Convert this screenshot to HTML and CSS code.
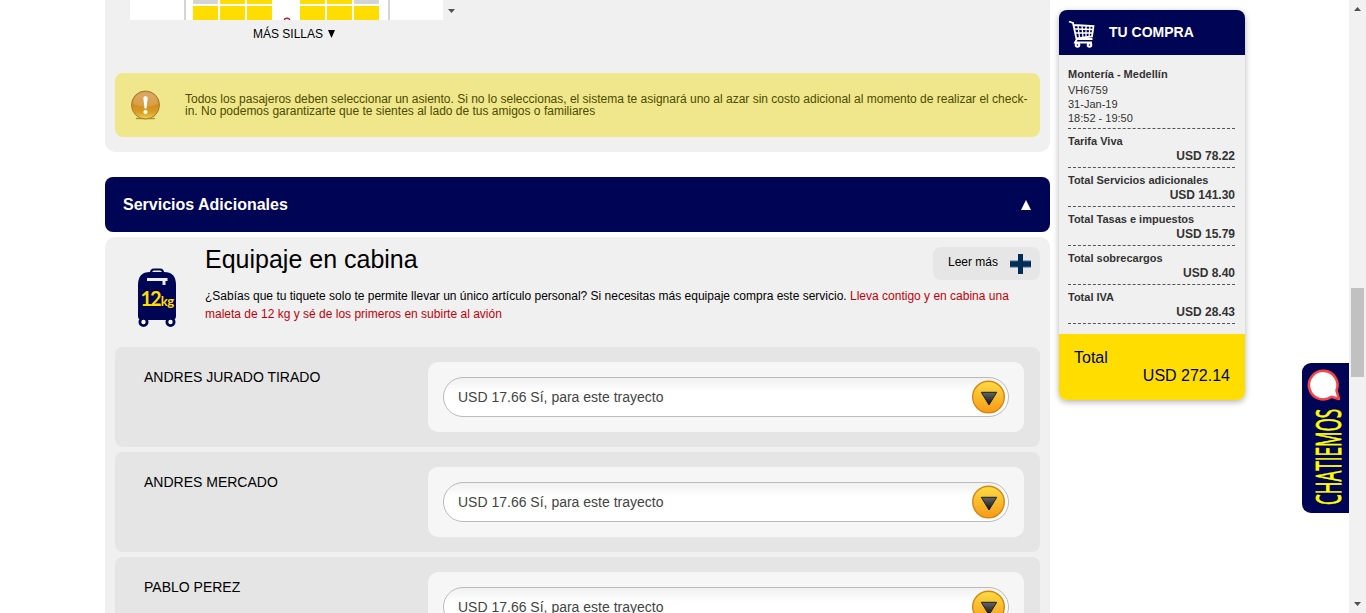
FILE: index.html
```html
<!DOCTYPE html>
<html lang="es">
<head>
<meta charset="utf-8">
<title>Servicios Adicionales</title>
<link rel="stylesheet" href="styles.css">
</head>
<body>
<svg class="defs" width="0" height="0" aria-hidden="true">
  <defs>
    <linearGradient id="gold" x1="0" y1="0" x2="0" y2="1"><stop offset="0" stop-color="#fbdc45"/><stop offset="1" stop-color="#f79a17"/></linearGradient>
    <linearGradient id="dark" x1="0" y1="0" x2="0" y2="1"><stop offset="0" stop-color="#666"/><stop offset="1" stop-color="#111"/></linearGradient>
    <linearGradient id="warn" x1="0" y1="0" x2="0" y2="1"><stop offset="0" stop-color="#d59a52"/><stop offset=".5" stop-color="#d28c22"/><stop offset=".75" stop-color="#d99c20"/><stop offset="1" stop-color="#ecd34e"/></linearGradient>
    <symbol id="drop" viewBox="0 0 34 34">
      <circle cx="16.500" cy="17" r="15.800" fill="url(#gold)" stroke="#d98510" stroke-width="1.400"/>
      <path d="M9.300 12.300h15.400L17 25z" fill="url(#dark)" stroke="#1c2022" stroke-width="1"/>
    </symbol>
  </defs>
</svg>
<div class="page">
  <main class="content">
    <section class="seats">
      <div class="seat-view">
        <div class="cabin">
          <div class="bank"><i class="seat taken"></i><i class="seat"></i><i class="seat"></i><i class="seat"></i><i class="seat"></i><i class="seat"></i></div>
          <svg class="aisle" width="8" height="20" viewBox="0 0 8 20"><path d="M1.500 20v-1q2.500-1.500 5 0v1" fill="none" stroke="#b5173f" stroke-width="1.300"/></svg>
          <div class="bank"><i class="seat"></i><i class="seat"></i><i class="seat taken"></i><i class="seat"></i><i class="seat"></i><i class="seat"></i></div>
        </div>
        <svg class="scroll-tip" width="7" height="4" viewBox="0 0 7 4"><path d="M0 0h7L3.500 4z" fill="#505050"/></svg>
      </div>
      <div class="more-seats">MÁS SILLAS <svg width="7" height="8" viewBox="0 0 7 8"><path d="M0 0h7L3.500 8z"/></svg></div>
      <div class="notice">
        <svg class="notice-icon" width="31" height="31" viewBox="0 0 31 31">
          <path d="M6 28.500h19" stroke="#b09537" stroke-width="1.500"/>
          <circle cx="15.500" cy="15" r="14" fill="url(#warn)" stroke="#a87b2c"/>
          <path d="M3 14Q4 3 15.500 2.500T28 14Q15.500 19 3 14z" fill="#fff" opacity=".16"/>
          <path d="M13.300 7.500q2.200-3 4.400 0l-1.200 11h-2z" fill="#fff"/><circle cx="15.500" cy="22" r="2.100" fill="#fff"/>
        </svg>
        <p>Todos los pasajeros deben seleccionar un asiento. Si no lo seleccionas, el sistema te asignará uno al azar sin costo adicional al momento de realizar el check-<br>in. No podemos garantizarte que te sientes al lado de tus amigos o familiares</p>
      </div>
    </section>
    <div class="section-bar"><h2>Servicios Adicionales</h2><svg width="10" height="10" viewBox="0 0 10 10"><path d="M0 10L5 0l5 10z" fill="#fff"/></svg></div>
    <section class="baggage">
      <header class="bag-head">
        <svg class="bag-icon" width="40" height="60" viewBox="0 0 40 60">
          <path d="M14 5q0-3.500 3-3.500h6q3 0 3 3.500" fill="none" stroke="#000455" stroke-width="2.200"/>
          <path d="M1 17Q1 4 13 4h14q12 0 12 13v31q0 4-4 4H5q-4 0-4-4z" fill="#000455"/>
          <path d="M10 10h20.500v3h-2v4h-3v-4H10z" fill="#f0eef5"/>
          <circle cx="6.500" cy="54" r="3.600" fill="#fff" stroke="#000455" stroke-width="2.800"/><circle cx="33.500" cy="54" r="3.600" fill="#fff" stroke="#000455" stroke-width="2.800"/>
          <text y="38"><tspan x="3.500" class="bag-num">12</tspan><tspan class="bag-kg" dx="1">kg</tspan></text>
        </svg>
        <div class="bag-copy">
          <h1>Equipaje en cabina</h1>
          <p>¿Sabías que tu tiquete solo te permite llevar un único artículo personal? Si necesitas más equipaje compra este servicio. <em>Lleva contigo y en cabina una<br>maleta de 12 kg y sé de los primeros en subirte al avión</em></p>
        </div>
        <button class="read-more"><span>Leer más</span><svg width="21" height="20" viewBox="0 0 21 20"><path d="M8 0h5v7h8v6h-8v7H8v-7H0V7h8z" fill="#002c55"/><path d="M0 7h8M13 7h8M0 13h8M13 13h8" stroke="#46658a" stroke-width="1"/></svg></button>
      </header>
      <div class="passengers">
        <div class="passenger"><span class="name">ANDRES JURADO TIRADO</span><div class="choice"><div class="select"><span>USD 17.66 Sí, para este trayecto</span><svg width="34" height="34"><use href="#drop"/></svg></div></div></div>
        <div class="passenger"><span class="name">ANDRES MERCADO</span><div class="choice"><div class="select"><span>USD 17.66 Sí, para este trayecto</span><svg width="34" height="34"><use href="#drop"/></svg></div></div></div>
        <div class="passenger"><span class="name">PABLO PEREZ</span><div class="choice"><div class="select"><span>USD 17.66 Sí, para este trayecto</span><svg width="34" height="34"><use href="#drop"/></svg></div></div></div>
      </div>
    </section>
  </main>
  <aside class="cart">
    <header>
      <svg width="28" height="28" viewBox="0 0 28 28" fill="none" stroke="#fff">
        <path d="M1 1.500l4 1.500 3.500 16h16M6 5l19.500 1-1.500 10.500-16 2M9 19l-2 3.500h17" stroke-width="1.800"/>
        <path d="M6.500 9l18.500.500M7.500 13l17 0M10 5.500l1.500 12M14 5.500l1 12M18 6v11M22 6l-1 11" stroke-width="1.300"/>
        <circle cx="9.500" cy="25" r="1.800" stroke-width="2"/><circle cx="21.500" cy="25" r="1.800" stroke-width="2"/>
      </svg>
      <h3>TU COMPRA</h3>
    </header>
    <div class="lines">
      <div class="trip"><b>Montería - Medellín</b><span>VH6759</span><span>31-Jan-19</span><span>18:52 - 19:50</span></div>
      <div class="line"><b>Tarifa Viva</b><strong>USD 78.22</strong></div>
      <div class="line"><b>Total Servicios adicionales</b><strong>USD 141.30</strong></div>
      <div class="line"><b>Total Tasas e impuestos</b><strong>USD 15.79</strong></div>
      <div class="line"><b>Total sobrecargos</b><strong>USD 8.40</strong></div>
      <div class="line"><b>Total IVA</b><strong>USD 28.43</strong></div>
    </div>
    <footer><span>Total</span><span class="sum">USD 272.14</span></footer>
  </aside>
  <div class="scrollbar">
    <svg width="7" height="4" viewBox="0 0 7 4"><path d="M0 4h7L3.500 0z" fill="#505050"/></svg>
    <div class="thumb"></div>
    <svg class="down" width="7" height="4" viewBox="0 0 7 4"><path d="M0 0h7L3.500 4z" fill="#505050"/></svg>
  </div>
</div>
<div class="chat">
  <svg width="47" height="150" viewBox="0 0 47 150">
    <path d="M29.500 33.800A14.300 14.300 0 1 1 34.500 27.500L37 36z" fill="#fff" stroke="#fb4545" stroke-width="2.600" stroke-linejoin="round"/>
    <text class="chat-word" transform="translate(38.500 142) rotate(-90) scale(.49 1)">CHATIEMOS</text>
  </svg>
</div>
</body>
</html>
```

FILE: styles.css
```css
* { box-sizing: border-box; }
body { margin: 0; height: 613px; overflow: hidden; background: #fff; color: #000; font-family: "Liberation Sans", Arial, sans-serif; }
h1, h2, h3, p { margin: 0; }
.defs { display: block; height: 0; }
.page { display: flex; align-items: flex-start; height: 613px; padding-left: 105px; overflow: hidden; }
.content { width: 945px; flex: none; }
.seats { height: 152px; padding: 0 10px; border-radius: 0 0 10px 10px; background: #f0f0f0; }
.seat-view { display: flex; height: 20px; padding-left: 15px; }
.cabin { width: 313px; height: 20px; padding: 0 52px 0 54px; display: flex; background: #fff; }
.bank:first-child { border-left: 2px solid #d4d4d4; padding-left: 7px; }
.bank:last-child { border-right: 2px solid #d4d4d4; padding-right: 9px; }
.bank { display: grid; grid-template-columns: repeat(3, 25px); grid-template-rows: 4px 14px; gap: 2px; flex: none; }
.seat { background: #fd0; }
.seat.taken { background: #d4d4d4; }
.aisle { margin: 0 9px 0 11px; flex: none; }
.scroll-tip { margin: 9px 0 0 5px; }
.more-seats { height: 53px; padding: 6px 0 0 138px; font-size: 12px; line-height: 16px; }
.more-seats svg { margin-left: 2px; }
.notice { height: 64px; display: flex; padding: 17px 0 0 15px; gap: 24px; border-radius: 8px; background: #f0e68c; color: #4c4c00; font-size: 12px; line-height: 12px; white-space: nowrap; }
.notice-icon { flex: none; }
.notice p { padding-top: 3px; }
.section-bar { height: 55px; margin: 25px 0 5px; padding: 0 19px 0 18px; display: flex; align-items: center; justify-content: space-between; border-radius: 8px; background: #000455; color: #fff; }
.section-bar h2 { font-size: 16px; }
.baggage { height: 450px; padding: 10px 10px 0; border-radius: 10px 10px 0 0; background: #f0f0f0; }
.bag-head { display: flex; height: 100px; padding-left: 22px; }
.bag-icon { flex: none; margin-top: 21px; }
.bag-num { font: bold 20px Lato, sans-serif; fill: #fd0; letter-spacing: -2px; }
.bag-kg { font: bold 13px Lato, sans-serif; fill: #fd0; letter-spacing: -.5px; }
.bag-copy { width: 728px; margin-left: 28px; white-space: nowrap; }
.bag-copy h1 { height: 40px; font-size: 25px; font-weight: 400; line-height: 25px; }
.bag-copy p { font-size: 12px; line-height: 18px; }
.bag-copy em { color: #c1000b; font-style: normal; }
.read-more { flex: none; width: 107px; height: 33px; padding: 0 9px 0 15px; display: flex; align-items: center; justify-content: space-between; border: 0; border-radius: 8px; background: #e6e6e6; color: #000; font: 12px "Liberation Sans", Arial, sans-serif; }
.read-more span { padding-bottom: 3px; }
.passengers { display: flex; flex-direction: column; gap: 5px; }
.passenger { height: 100px; display: flex; justify-content: space-between; padding: 15px 16px 15px 29px; border-radius: 8px; background: #e5e5e5; }
.name { padding-top: 7px; font-size: 14px; line-height: 16px; }
.choice { width: 596px; height: 70px; padding: 15px; border-radius: 10px; background: #f6f6f6; }
.select { height: 40px; display: flex; align-items: center; justify-content: space-between; padding: 0 2px 0 14px; border: 1px solid #bbb; border-radius: 20px; background: linear-gradient(#f1f1f1, #fff 14px); color: #444; font-size: 14px; }
.cart { flex: none; width: 186px; margin: 10px 0 0 9px; border-radius: 8px; overflow: hidden; background: #f0f0f0; color: #333; box-shadow: 0 2px 6px rgba(0, 0, 0, .3); }
.cart header { height: 45px; padding-left: 9px; display: flex; align-items: center; gap: 13px; background: #000455; color: #fff; }
.cart header svg { margin-top: 3px; }
.cart h3 { padding-bottom: 2px; font-size: 14px; line-height: 16px; }
.lines { height: 279px; padding: 12px 10px 0 9px; font-size: 11px; }
.trip { height: 62px; display: flex; flex-direction: column; line-height: 14px; border-bottom: 1px dashed #555; }
.trip b { height: 16px; }
.line { height: 39px; display: flex; flex-direction: column; padding-top: 5px; line-height: 15px; border-bottom: 1px dashed #555; }
.line strong { align-self: flex-end; font-size: 12px; line-height: 14px; }
.cart footer { height: 66px; padding: 15px 15px 0; display: flex; flex-direction: column; background: #fd0; color: #000455; font-size: 16px; line-height: 18px; }
.sum { align-self: flex-end; }
.scrollbar { width: 17px; height: 613px; margin-left: auto; padding: 7px 2px; display: flex; flex-direction: column; align-items: center; background: #f1f1f1; }
.scrollbar svg { flex: none; }
.thumb { flex: none; width: 13px; height: 89px; margin-top: 277px; background: #c1c1c1; }
.scrollbar .down { margin-top: auto; }
.chat { position: absolute; left: 1302px; top: 363px; width: 47px; height: 150px; border-radius: 9px 0 0 9px; background: #000455; overflow: hidden; }
.chat svg { display: block; }
.chat-word { font: 35px "Open Sans", sans-serif; fill: #ff0; stroke: #ff0; stroke-width: .8px; }
```
